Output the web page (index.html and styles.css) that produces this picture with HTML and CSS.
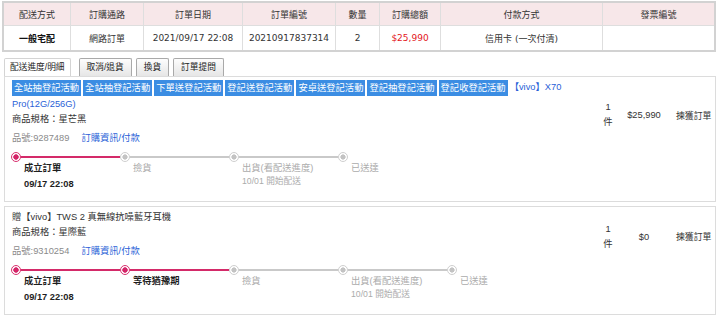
FILE: index.html
```html
<!DOCTYPE html>
<html lang="zh-Hant">
<head>
<meta charset="utf-8">
<title>訂單明細</title>
<link rel="stylesheet" href="styles.css">
</head>
<body>
<div class="page">
  <table class="summary">
    <colgroup>
      <col class="c1"><col class="c2"><col class="c3"><col class="c4"><col class="c5"><col class="c6"><col class="c7"><col class="c8">
    </colgroup>
    <thead>
      <tr><th>配送方式</th><th>訂購通路</th><th>訂單日期</th><th>訂單編號</th><th>數量</th><th>訂購總額</th><th>付款方式</th><th>發票編號</th></tr>
    </thead>
    <tbody>
      <tr><td class="strong">一般宅配</td><td>網路訂單</td><td>2021/09/17 22:08</td><td>20210917837314</td><td>2</td><td class="red">$25,990</td><td>信用卡 (一次付清)</td><td></td></tr>
    </tbody>
  </table>

  <div class="tabs">
    <span class="tab active">配送進度/明細</span>
    <span class="tab">取消/退貨</span>
    <span class="tab">換貨</span>
    <span class="tab">訂單提問</span>
  </div>

  <div class="item">
    <div class="item-row">
      <div class="info">
        <div class="title"><span class="tag">全站抽登記活動</span><span class="tag">全站抽登記活動</span><span class="tag">下單送登記活動</span><span class="tag">登記送登記活動</span><span class="tag">安卓送登記活動</span><span class="tag">登記抽登記活動</span><span class="tag">登記收登記活動</span><span class="pname">【vivo】X70 Pro(12G/256G)</span></div>
        <div class="spec">商品規格：星芒黑</div>
        <div class="sku">品號:9287489<span class="link">訂購資訊/付款</span></div>
      </div>
      <div class="cell qty">1<br>件</div>
      <div class="cell price">$25,990</div>
      <div class="cell status">揀獲訂單</div>
    </div>
    <div class="timeline">
      <div class="step on">
        <div class="track"><span class="dot"></span><span class="line"></span></div>
        <div class="label">成立訂單</div>
        <div class="time">09/17 22:08</div>
      </div>
      <div class="step">
        <div class="track"><span class="dot"></span><span class="line"></span></div>
        <div class="label">撿貨</div>
      </div>
      <div class="step">
        <div class="track"><span class="dot"></span><span class="line"></span></div>
        <div class="label">出貨(看配送進度)</div>
        <div class="note">10/01 開始配送</div>
      </div>
      <div class="step last">
        <div class="track"><span class="dot"></span></div>
        <div class="label">已送達</div>
      </div>
    </div>
  </div>

  <div class="item">
    <div class="item-row">
      <div class="info">
        <div class="title">贈【vivo】TWS 2 真無線抗噪藍牙耳機</div>
        <div class="spec">商品規格：星際藍</div>
        <div class="sku">品號:9310254<span class="link">訂購資訊/付款</span></div>
      </div>
      <div class="cell qty">1<br>件</div>
      <div class="cell price">$0</div>
      <div class="cell status">揀獲訂單</div>
    </div>
    <div class="timeline">
      <div class="step on">
        <div class="track"><span class="dot"></span><span class="line"></span></div>
        <div class="label">成立訂單</div>
        <div class="time">09/17 22:08</div>
      </div>
      <div class="step on">
        <div class="track"><span class="dot"></span><span class="line"></span></div>
        <div class="label">等待猶豫期</div>
      </div>
      <div class="step">
        <div class="track"><span class="dot"></span><span class="line"></span></div>
        <div class="label">撿貨</div>
      </div>
      <div class="step">
        <div class="track"><span class="dot"></span><span class="line"></span></div>
        <div class="label">出貨(看配送進度)</div>
        <div class="note">10/01 開始配送</div>
      </div>
      <div class="step last">
        <div class="track"><span class="dot"></span></div>
        <div class="label">已送達</div>
      </div>
    </div>
  </div>
</div>
</body>
</html>
```

FILE: styles.css
```css
* { box-sizing: border-box; }
html, body { margin: 0; padding: 0; background: #fff; }
body {
  font-family: "Liberation Sans", "Noto Sans CJK TC", sans-serif;
  font-size: 9.3px;
  color: #333;
}
.page { padding: 1px 4px 0 2px; }

/* summary table */
.summary {
  width: 714px;
  table-layout: fixed;
  border-collapse: separate;
  border-spacing: 0;
  border: 2px solid #d2d2d2;
  font-family: "DejaVu Sans", "Noto Sans CJK TC", sans-serif;
  font-size: 9px;
}
.summary .c1 { width: 66px; }
.summary .c2 { width: 73px; }
.summary .c3 { width: 99px; }
.summary .c4 { width: 93px; }
.summary .c5 { width: 44px; }
.summary .c6 { width: 61px; }
.summary .c7 { width: 162px; }
.summary .c8 { width: 112px; }
.summary th, .summary td {
  text-align: center;
  padding: 0;
  border-left: 1px solid #dedede;
  white-space: nowrap;
}
.summary th:first-child, .summary td:first-child { border-left: none; }
.summary th {
  height: 23px;
  background: #f7e7e9;
  font-weight: normal;
  color: #333;
  border-bottom: 1px solid #dedede;
}
.summary td { height: 24px; color: #333; }
.summary td.strong { font-weight: bold; color: #111; }
.summary td.red { color: #e3151b; }

/* tabs */
.tabs { display: flex; align-items: flex-end; margin: 6px 0 0 2px; height: 18px; }
.tab {
  height: 18px;
  line-height: 17px;
  padding: 0 7px;
  margin-right: 4px;
  font-size: 8.7px;
  color: #222;
  border: 1px solid #a9a9a9;
  border-bottom: none;
  border-radius: 2px 2px 0 0;
  background: linear-gradient(#fdfdfd, #e6e6e6);
}
.tab.active {
  padding: 0 5px;
  margin-right: 8px;
  background: #fff;
  border-color: #d4d4d4;
}

/* items */
.item {
  margin-left: 2px;
  border: 1px solid #dcdcdc;
  padding: 2px 0 10px 7px;
}
.item + .item { margin-top: 4px; }
.item-row {
  display: grid;
  grid-template-columns: 1fr 22px 50px 46px;
  align-items: center;
}
.title { line-height: 16px; }
.tag {
  display: inline-block;
  vertical-align: top;
  margin: 1px 2px 0 0;
  padding: 0 2px;
  height: 16px;
  line-height: 16px;
  background: #3b8de3;
  color: #fff;
  white-space: nowrap;
}
.pname { color: #2a5fd7; }
.spec { line-height: 14px; }
.sku { line-height: 14px; margin-top: 5px; color: #8a8a8a; }
.link { color: #2a5fd7; margin-left: 12px; }
.cell { padding-top: 6px; color: #333; }
.qty { text-align: center; line-height: 15px; }
.price { text-align: center; }
.status { padding-left: 7px; font-size: 8.9px; white-space: nowrap; }

/* timeline */
.timeline { display: flex; margin: 7px 0 0 -1px; }
.step { flex: none; width: 109px; }
.step.last { width: auto; }
.track { display: flex; align-items: center; height: 10px; }
.dot {
  flex: none;
  width: 10px;
  height: 10px;
  border-radius: 50%;
  border: 1px solid #cfcfcf;
  background: radial-gradient(circle, #c3c3c3 0 2.3px, #fff 2.9px);
}
.line { flex: 1; height: 1.5px; background: #c9c9c9; }
.step.on .dot {
  border: 1.5px solid #d9316f;
  background: radial-gradient(circle, #d42468 0 2.4px, #fff 3px);
}
.step.on .line { background: #d42a69; }
.label {
  padding-left: 13px;
  margin-top: -1px;
  line-height: 14px;
  color: #ababab;
  white-space: nowrap;
}
.step.on .label { color: #1e1e1e; font-weight: bold; }
.time {
  padding-left: 13px;
  margin-top: 2px;
  line-height: 14px;
  font-weight: bold;
  color: #1e1e1e;
}
.note {
  padding-left: 13px;
  font-size: 8.7px;
  line-height: 12px;
  color: #ababab;
  white-space: nowrap;
}
```
